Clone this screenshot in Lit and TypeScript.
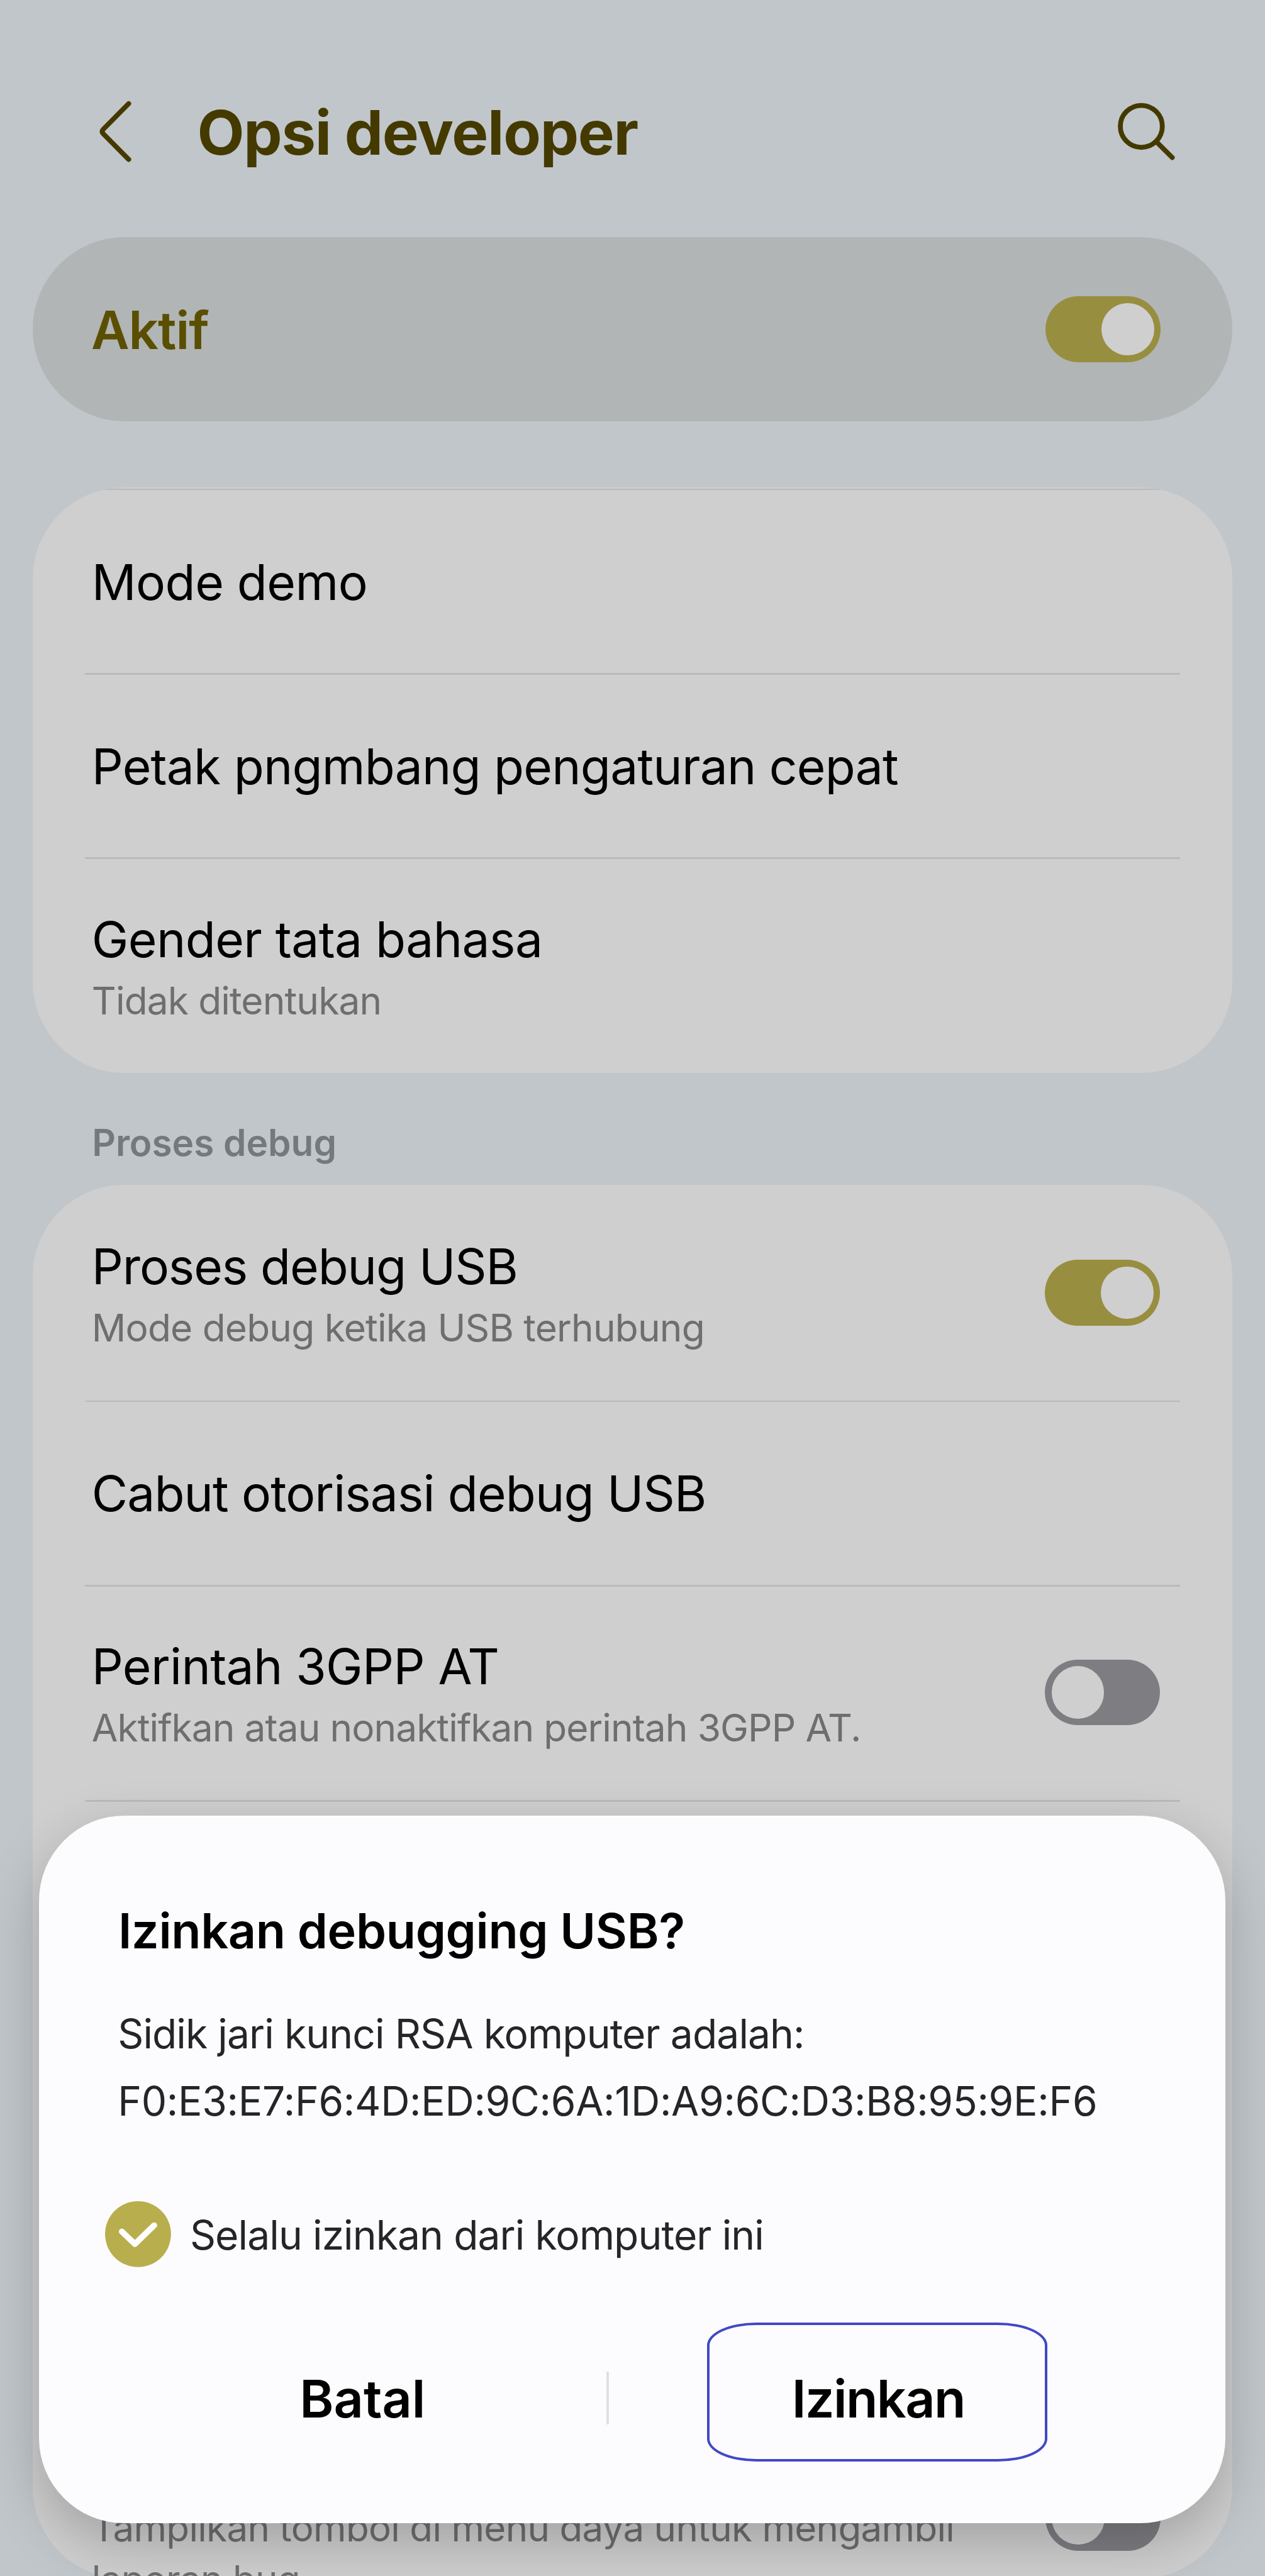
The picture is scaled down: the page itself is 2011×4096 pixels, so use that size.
import { LitElement, html, css, nothing } from "lit";
import { customElement, property } from "lit/decorators.js";

interface Row {
  title: string;
  track: number;
  sub?: string;
  subTrack?: number;
  toggle?: "on" | "off";
}

const GENERAL: Row[] = [
  { title: "Mode demo", track: -0.65 },
  { title: "Petak pngmbang pengaturan cepat", track: -0.95 },
  { title: "Gender tata bahasa", track: -0.7, sub: "Tidak ditentukan", subTrack: -1.0 },
];

const DEBUG: Row[] = [
  { title: "Proses debug USB", track: -1.3, sub: "Mode debug ketika USB terhubung", subTrack: -0.93, toggle: "on" },
  { title: "Cabut otorisasi debug USB", track: -1.05 },
  { title: "Perintah 3GPP AT", track: -0.75, sub: "Aktifkan atau nonaktifkan perintah 3GPP AT.", subTrack: -1.08, toggle: "off" },
];

@customElement("ui-switch")
class UiSwitch extends LitElement {
  @property({ type: Boolean, reflect: true }) on = false;
  static styles = css`
    :host {
      display: flex;
      box-sizing: border-box;
      flex: none;
      width: calc(212 * var(--u));
      height: calc(121 * var(--u));
      padding: calc(12 * var(--u));
      border-radius: calc(61 * var(--u));
      background: #7e7d82;
    }
    :host([on]) {
      background: #978e40;
      justify-content: flex-end;
    }
    .thumb {
      width: calc(97 * var(--u));
      height: calc(97 * var(--u));
      border-radius: 50%;
      background: #cfcfcf;
    }
  `;
  render() {
    return html`<div class="thumb"></div>`;
  }
}

@customElement("app-root")
class AppRoot extends LitElement {
  static styles = css`
    :host {
      --u: calc(2011px / 2331);
      display: block;
      position: relative;
      width: 2011px;
      height: 4096px;
      overflow: hidden;
      background: #c1c6ca;
      font-family: "Inter", "Roboto", sans-serif;
      color: #000;
      white-space: nowrap;
    }
    .page {
      display: flex;
      flex-direction: column;
      padding: 0 calc(60 * var(--u));
    }
    .bar {
      display: flex;
      align-items: center;
      height: calc(437 * var(--u));
      box-sizing: border-box;
      padding: calc(53 * var(--u)) calc(105 * var(--u)) 0 calc(123 * var(--u));
      color: #443a00;
    }
    .back {
      width: calc(60 * var(--u));
      height: calc(114 * var(--u));
      margin-top: calc(-4 * var(--u));
    }
    .bar-title {
      flex: 1;
      margin-left: calc(120.5 * var(--u));
      font-size: calc(113 * var(--u));
      font-weight: 700;
      letter-spacing: calc(-1.5 * var(--u));
      line-height: calc(140 * var(--u));
      padding-top: calc(1 * var(--u));
    }
    .search {
      width: calc(108 * var(--u));
      height: calc(108 * var(--u));
      margin-top: calc(-5 * var(--u));
    }
    .master {
      display: flex;
      align-items: center;
      justify-content: space-between;
      box-sizing: border-box;
      height: calc(340 * var(--u));
      padding: 0 calc(132.5 * var(--u)) 0 calc(108 * var(--u));
      border-radius: calc(170 * var(--u));
      background: #b1b5b6;
    }
    .master-label {
      font-size: calc(96.5 * var(--u));
      font-weight: 600;
      letter-spacing: calc(-1.1 * var(--u));
      color: #5a4f00;
      padding-top: calc(2 * var(--u));
    }
    .card {
      display: flex;
      flex-direction: column;
      box-sizing: border-box;
      border-radius: calc(168 * var(--u));
      background: #cfcfcf;
    }
    .general {
      margin-top: calc(121 * var(--u));
      height: calc(1079 * var(--u));
      overflow: hidden;
    }
    .hairline {
      flex: none;
      height: calc(3 * var(--u));
      margin-top: calc(2.5 * var(--u));
      background: #bababa;
    }
    .row {
      display: flex;
      align-items: center;
      justify-content: space-between;
      box-sizing: border-box;
      flex: none;
      height: calc(337 * var(--u));
      margin: 0 calc(97 * var(--u));
      padding: 0 calc(36.5 * var(--u)) 0 calc(12 * var(--u));
    }
    .row.tall {
      height: calc(394 * var(--u));
    }
    .row ui-switch {
      margin-bottom: calc(3 * var(--u));
    }
    .rule {
      flex: none;
      height: calc(3 * var(--u));
      margin: 0 calc(97 * var(--u));
      background: #bababa;
    }
    .title {
      font-size: calc(91 * var(--u));
      line-height: calc(126 * var(--u));
      letter-spacing: calc(var(--track) * var(--u));
      padding-top: calc(2 * var(--u));
      margin-bottom: calc(-1 * var(--u));
    }
    .sub {
      font-size: calc(70 * var(--u));
      line-height: calc(100 * var(--u));
      letter-spacing: calc(var(--track) * var(--u));
      color: #6e6e70;
    }
    .section {
      height: calc(207 * var(--u));
      box-sizing: border-box;
      padding: calc(69 * var(--u)) 0 0 calc(109.5 * var(--u));
      font-size: calc(67.8 * var(--u));
      line-height: calc(120 * var(--u));
      font-weight: 600;
      color: #74797e;
    }
    .debug {
      padding-top: calc(3 * var(--u));
      height: calc(2569 * var(--u));
    }
    .last {
      display: flex;
      justify-content: space-between;
      margin: auto calc(133 * var(--u)) calc(-49 * var(--u)) calc(109 * var(--u));
      font-size: calc(69.6 * var(--u));
      line-height: calc(95 * var(--u));
      letter-spacing: calc(-0.8 * var(--u));
      color: #6e6e70;
    }
    .last-text {
      padding-top: calc(31 * var(--u));
    }
    .dialog {
      position: absolute;
      left: calc(72 * var(--u));
      top: calc(3346 * var(--u));
      width: calc(2186 * var(--u));
      height: calc(1304 * var(--u));
      box-sizing: border-box;
      padding: calc(147 * var(--u)) calc(121 * var(--u)) 0;
      border-radius: calc(157 * var(--u));
      background: #fcfcfe;
      box-shadow: 0 calc(35 * var(--u)) calc(100 * var(--u)) rgba(0, 0, 0, 0.22);
      display: flex;
      flex-direction: column;
      color: #242527;
    }
    .heading {
      margin-left: calc(25 * var(--u));
      font-size: calc(89.5 * var(--u));
      line-height: calc(134 * var(--u));
      font-weight: 600;
      letter-spacing: calc(-0.4 * var(--u));
      color: #000;
    }
    .message {
      margin: calc(60 * var(--u)) 0 0 calc(24 * var(--u));
      font-size: calc(74.3 * var(--u));
      line-height: calc(124 * var(--u));
      letter-spacing: calc(-1.05 * var(--u));
    }
    .fingerprint {
      letter-spacing: calc(-0.35 * var(--u));
    }
    .check {
      display: flex;
      align-items: center;
      margin-top: calc(121 * var(--u));
      gap: calc(35 * var(--u));
      font-size: calc(74.3 * var(--u));
      line-height: calc(121 * var(--u));
      letter-spacing: calc(-1.05 * var(--u));
    }
    .check-icon {
      width: calc(121.5 * var(--u));
      height: calc(121.5 * var(--u));
      margin-left: calc(0.5 * var(--u));
    }
    .check-label {
      padding-top: calc(3 * var(--u));
    }
    .actions {
      display: flex;
      align-items: center;
      margin-top: calc(101 * var(--u));
      height: calc(256 * var(--u));
      font-size: calc(95.5 * var(--u));
      font-weight: 600;
      color: #000;
    }
    .cancel,
    .allow {
      display: flex;
      align-items: center;
      justify-content: center;
      box-sizing: border-box;
      height: 100%;
      padding-top: calc(25 * var(--u));
    }
    .cancel {
      width: calc(950 * var(--u));
      margin-right: calc(-26 * var(--u));
    }
    .split {
      width: calc(5 * var(--u));
      height: calc(97 * var(--u));
      margin-top: calc(21 * var(--u));
      background: #dfe0e2;
    }
    .allow {
      width: calc(627 * var(--u));
      margin-left: calc(181 * var(--u));
      padding-left: calc(4 * var(--u));
      border: calc(5 * var(--u)) solid #4048c8;
      border-radius: calc(91 * var(--u)) / calc(42 * var(--u));
      letter-spacing: calc(-1.8 * var(--u));
    }
  `;

  private row(r: Row) {
    return html`
      <div class="row ${r.sub ? "tall" : ""}">
        <div>
          <div class="title" style="--track:${r.track}">${r.title}</div>
          ${r.sub ? html`<div class="sub" style="--track:${r.subTrack ?? 0}">${r.sub}</div>` : nothing}
        </div>
        ${r.toggle ? html`<ui-switch ?on=${r.toggle === "on"}></ui-switch>` : nothing}
      </div>
    `;
  }

  render() {
    return html`
      <div class="page">
        <div class="bar">
          <svg class="back" viewBox="0 0 60 114" fill="none" stroke="currentColor" stroke-width="9" stroke-linecap="round" stroke-linejoin="round">
            <path d="M54 5.5 L7.5 52.5 Q3 57 7.5 61.5 L54 108.5" />
          </svg>
          <div class="bar-title">Opsi developer</div>
          <svg class="search" viewBox="0 0 108 108" fill="none" stroke="currentColor" stroke-width="9" stroke-linecap="round">
            <circle cx="44.5" cy="44" r="38.7" />
            <path d="M73 73 L101.5 101.5" />
          </svg>
        </div>

        <div class="master">
          <div class="master-label">Aktif</div>
          <ui-switch on></ui-switch>
        </div>

        <div class="card general">
          <div class="hairline"></div>
          ${GENERAL.map((r, i) => html`${i ? html`<div class="rule"></div>` : nothing}${this.row(r)}`)}
        </div>

        <div class="section">Proses debug</div>

        <div class="card debug">
          ${DEBUG.map((r) => html`${this.row(r)}<div class="rule"></div>`)}
          <div class="last">
            <div class="last-text">
              <div>Tampilkan tombol di menu daya untuk mengambil</div>
              <div>laporan bug</div>
            </div>
            <ui-switch></ui-switch>
          </div>
        </div>
      </div>

      <div class="dialog">
        <div class="heading">Izinkan debugging USB?</div>
        <div class="message">
          <div>Sidik jari kunci RSA komputer adalah:</div>
          <div class="fingerprint">F0:E3:E7:F6:4D:ED:9C:6A:1D:A9:6C:D3:B8:95:9E:F6</div>
        </div>
        <div class="check">
          <svg class="check-icon" viewBox="0 0 121.5 121.5" fill="none">
            <circle cx="60.75" cy="60.75" r="60.75" fill="#b9ae4e" />
            <path d="M31 56 L55 79 L90.5 44.5" stroke="#fff" stroke-width="11" stroke-linecap="round" stroke-linejoin="round" />
          </svg>
          <div class="check-label">Selalu izinkan dari komputer ini</div>
        </div>
        <div class="actions">
          <div class="cancel">Batal</div>
          <div class="split"></div>
          <div class="allow">Izinkan</div>
        </div>
      </div>
    `;
  }
}
